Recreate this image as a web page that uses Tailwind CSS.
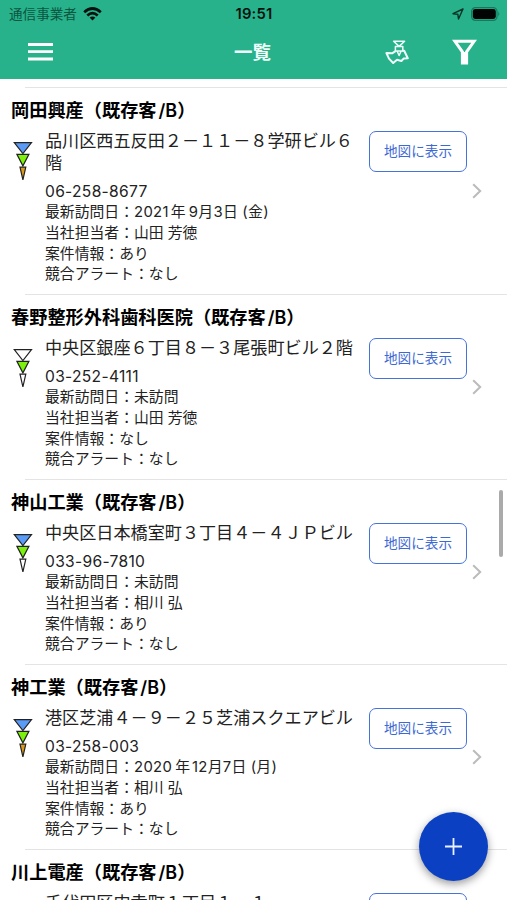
<!DOCTYPE html>
<html lang="ja">
<head>
<meta charset="utf-8">
<title>一覧</title>
<script src="https://cdn.jsdelivr.net/npm/@tailwindcss/browser@4"></script>
</head>
<body class="bg-white">
<div class="relative flex h-[900px] w-[507px] flex-col overflow-hidden bg-white font-['Inter','Noto_Sans_CJK_JP',sans-serif] text-[#222]">
  <header class="h-[79px] shrink-0 bg-[#27b28b]">
    <div class="grid h-[28px] grid-cols-3 items-center pl-[9px] pr-[8px]">
      <div class="flex items-center gap-[6px]">
        <span class="whitespace-nowrap text-[13.6px] leading-[28px] text-[#0b5540]">通信事業者</span>
        <svg class="h-[14px] w-[19px]" viewBox="0 0 19 14" fill="none" stroke="#06110d" stroke-width="2.7"><path d="M1.2 5.2Q9.5-2.2 17.8 5.2M4.3 8.4Q9.5 3.8 14.7 8.4"/><path d="M9.5 13.6 6.6 10.6Q9.5 8.2 12.4 10.6Z" fill="#06110d" stroke="none"/></svg>
      </div>
      <span class="text-center text-[14.8px] font-semibold leading-[28px] tracking-[0.2px] text-[#06110d]">19:51</span>
      <div class="-mr-[2px] flex items-center justify-end gap-[7px]">
        <svg class="h-[12px] w-[12px]" viewBox="0 0 12 12" fill="none" stroke="#0a3326" stroke-width="1.4" stroke-linejoin="round"><path d="M11 1 1 5.7 5.8 6.2 6.5 11Z"/></svg>
        <svg class="h-[14px] w-[30px]" viewBox="0 0 30 14"><rect x=".6" y=".6" width="25.4" height="12.8" rx="3.8" fill="none" stroke="#15795c" stroke-width="1.2"/><rect x="1.8" y="2" width="23" height="10" rx="2.4" fill="#020403"/><path d="M27.3 4.8q2 2.2 0 4.4Z" fill="#15795c"/></svg>
      </div>
    </div>
    <div class="grid h-[48px] grid-cols-3 items-center pl-[28px] pr-[30px]">
      <svg class="h-[18px] w-[25px]" viewBox="0 0 25 18" fill="#fff"><path d="M0 0h25v3H0zM0 7.2h25v2.8H0zM0 14.4h25v3H0z"/></svg>
      <span class="text-center text-[18.5px] font-bold leading-[48px] text-[#effff9]">一覧</span>
      <div class="flex items-center justify-end gap-[43px]">
        <svg class="h-[24px] w-[24px]" viewBox="0 0 24 24" fill="none" stroke="#effff9" stroke-width="1.5" stroke-linejoin="round"><path d="M8.6 1.2h11L14.1 6.4ZM10.4 6.5h7.4V11H10.4ZM11.8 10.5l2.3 5 2.3-5"/><path d="M10.5 11.2 7.5 13.2 1.4 13 4 18.6 8.2 23 12 19.8 16.4 21 18.6 18.6 22.8 18.2 19.2 10.8H17.5" stroke-width="2"/></svg>
        <svg class="h-[26px] w-[25px]" viewBox="0 0 25 26" fill="none" stroke="#fff" stroke-width="3"><path d="M2.9 2.3h19.2L14.6 12.8V24h-4.2V12.8Z"/><path d="M12.5 13v12"/></svg>
      </div>
    </div>
  </header>
  <main id="list" class="flex flex-col pt-[8px]"></main>
  <div class="absolute left-[499px] top-[490px] h-[67px] w-[4px] rounded-full bg-[#aaa]"></div>
  <button class="absolute left-[419px] top-[812px] flex h-[69px] w-[69px] items-center justify-center rounded-full bg-[#0b40c3] shadow-[0_3px_9px_rgba(0,0,0,0.4)]" aria-label="追加">
    <svg class="h-[17px] w-[17px]" viewBox="0 0 17 17" stroke="#eaf1ff" stroke-width="1.8"><path d="M8.5 0v17M0 8.5h17"/></svg>
  </button>
</div>
<script>
const customers = [
  { name: '岡田興産', h: 'h-[207px]', address: '品川区西五反田２－１１－８学研ビル６階', phone: '06-258-8677', visit: '<span class="tracking-[0.35px]">2021</span><span class="ml-[2px]">年</span><span class="ml-[3px] tracking-[0.4px]">9月3日</span><span class="ml-[4px] tracking-[0.3px]">(金)</span>', staff: '山田 芳徳', deal: 'あり', colors: ['#5b9bf8', '#7cf20c', '#d99a1c'] },
  { name: '春野整形外科歯科医院', h: 'h-[185px]', address: '中央区銀座６丁目８－３尾張町ビル２階', phone: '03-252-4111', visit: '未訪問', staff: '山田 芳徳', deal: 'なし', colors: ['#fff', '#7cf20c', '#fff'] },
  { name: '神山工業', h: 'h-[185px]', address: '中央区日本橋室町３丁目４－４ＪＰビル', phone: '033-96-7810', visit: '未訪問', staff: '相川 弘', deal: 'あり', colors: ['#5b9bf8', '#7cf20c', '#fff'] },
  { name: '神工業', h: 'h-[185px]', address: '港区芝浦４－９－２５芝浦スクエアビル', phone: '03-258-003', visit: '<span class="tracking-[0.35px]">2020</span><span class="ml-[3px]">年</span><span class="ml-[2px] tracking-[0.3px]">12月7日</span><span class="ml-[4px] tracking-[0.3px]">(月)</span>', staff: '相川 弘', deal: 'あり', colors: ['#5b9bf8', '#7cf20c', '#d99a1c'] },
  { name: '川上電産', h: 'h-[185px]', address: '千代田区内幸町１丁目１－１', phone: '03-258-1100', visit: '未訪問', staff: '相川 弘', deal: 'なし', colors: ['#5b9bf8', '#7cf20c', '#fff'] },
];
document.getElementById('list').innerHTML = customers.map(c => `
  <article class="${c.h} shrink-0">
    <div class="ml-[25px] h-px bg-[#e4e4e4]"></div>
    <div class="flex h-full flex-col pt-[8px]">
      <h2 class="ml-[11px] h-[27px] whitespace-nowrap text-[18.2px] font-bold leading-[27px] text-black">${c.name}（既存客<span class="ml-[2px] text-[18px] font-semibold">/B</span><span class="inline-block w-[18px] font-['Noto_Sans_CJK_JP']">）</span></h2>
      <div class="flex pl-[13px]">
        <svg class="mt-[18px] h-[42px] w-[20px] shrink-0" viewBox="0 0 20 42" stroke="#222" stroke-width="1.2"><path fill="${c.colors[0]}" d="M1.3 1.6h17.2L9.9 12.6Z"/><path fill="${c.colors[1]}" d="M3.9 13.4h12L9.9 24.9Z"/><path fill="${c.colors[2]}" d="M7 26.2h5.8L9.9 38.8Z"/></svg>
        <div class="ml-[12px] w-[312px] shrink-0 pt-[7px]">
          <p class="text-[17.13px] leading-[22px]">${c.address}</p>
          <p class="mt-[7px] h-[21px] text-[15.6px] leading-[21px] tracking-[0.3px]">${c.phone}</p>
          <div class="text-[14.84px] leading-[20.8px]">
            <p>最新訪問日：${c.visit}</p>
            <p>当社担当者：${c.staff}</p>
            <p>案件情報：${c.deal}</p>
            <p>競合アラート：なし</p>
          </div>
        </div>
        <div class="ml-[12px] mt-[8px] flex h-[41px] w-[98px] shrink-0 items-center justify-center rounded-[7px] border-[1.5px] border-[#4673d8] text-[13.6px] text-[#3c69d4]">地図に表示</div>
        <svg class="ml-[5px] h-[16px] w-[10px] shrink-0 ${c.h === 'h-[207px]' ? 'mt-[60px]' : 'mt-[49px]'}" viewBox="0 0 10 16" fill="none" stroke="#bbb" stroke-width="2"><path d="M1.2 1.2 8.2 8l-7 6.8"/></svg>
      </div>
    </div>
  </article>`).join('');
</script>
</body>
</html>
